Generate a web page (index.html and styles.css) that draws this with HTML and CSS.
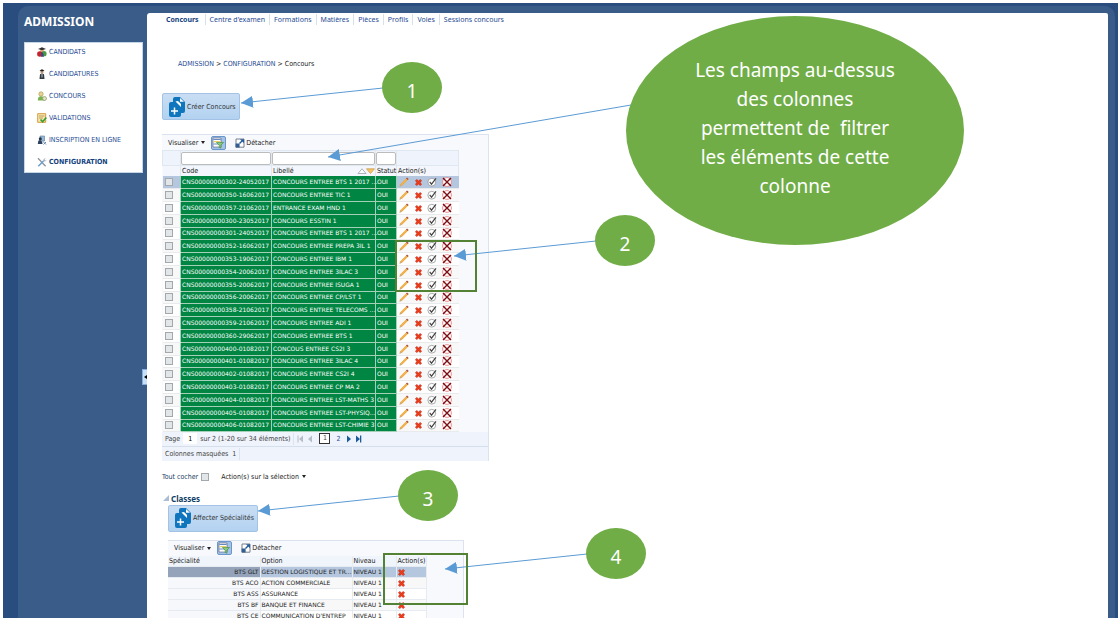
FILE: index.html
```html
<!DOCTYPE html>
<html lang="fr">
<head>
<meta charset="utf-8">
<title>Admission - Concours</title>
<link rel="stylesheet" href="styles.css">
</head>
<body>
<svg class="defs" aria-hidden="true">
  <symbol id="i-pencil" viewBox="0 0 10 10"><path d="M.6 9.5 1.3 7.2 7.3 1.2 9 2.8 3 8.8z" fill="#f0a83a"/><path d="M2.2 8 8.1 2" stroke="#f7bd5c" stroke-width=".7"/><path d="M.4 9.7 1.3 7.2 3 8.8z" fill="#c7ad87"/><path d="M7 1.5 8 .5 9.7 2.1 8.7 3.1z" fill="#a84e3d"/></symbol>
  <symbol id="i-cross" viewBox="0 0 8 8"><path d="M.6 1.9 1.9.6 4 2.2 6.1.6 7.4 1.9 5.9 4 7.4 6.1 6.1 7.4 4 5.8 1.9 7.4.6 6.1 2.1 4z" fill="#f0401a" stroke="#b51a10" stroke-width=".7"/></symbol>
  <symbol id="i-check" viewBox="0 0 10 10"><circle cx="4.8" cy="5.2" r="3.9" fill="#fff" stroke="#888" stroke-width=".7"/><path d="M2.7 4.9 4.5 7.2 9 1.3" fill="none" stroke="#444" stroke-width="1.2"/></symbol>
  <symbol id="i-ban" viewBox="0 0 10 10"><circle cx="5" cy="5" r="4.4" fill="#fff" stroke="#f08080" stroke-width=".9"/><path d="M1 1 9 9M9 1 1 9" stroke="#7a0c14" stroke-width="1.4"/></symbol>
  <symbol id="i-copy" viewBox="0 0 18 22"><path d="M5 3q0-2 2-2h5l5 5v9q0 2-2 2H5z" fill="#0f75bd"/><path d="M3 6h5l5 5v8q0 2-2 2H3q-2 0-2-2V8q0-2 2-2z" fill="#0f75bd"/><path d="M12 2v3.700h4z" fill="#fff"/><path d="M7.500 5.500 13 11V8L10 5z" fill="#fff"/><path d="M6.500 11.500v7M3 15h7" stroke="#fff" stroke-width="1.500"/></symbol>
  <symbol id="i-filter" viewBox="0 0 12 12"><path d="M1 1h8v9H1z" fill="#fff" stroke="#557" stroke-width=".6"/><path d="M1.300 2.500h7.400M1.300 7h6" stroke="#638bc0" stroke-width="1"/><path d="M1.300 4.600h7.400" stroke="#e5ce68" stroke-width="1.300"/><path d="M4.500 5.500h7L8.900 8.200v3l-1.700-.8V8.200z" fill="#8ac976" stroke="#39883f" stroke-width=".6"/></symbol>
  <symbol id="i-detach" viewBox="0 0 10 10"><path d="M1 1h8v8.200H1z" fill="#fff" stroke="#66717f" stroke-width=".9"/><path d="M.6 5.500h4v4h-4z" fill="#345d91"/><path d="M5 1.200h4v4z" fill="#245a9c"/><path d="M4.500 5.500 7.700 2.300" stroke="#245a9c" stroke-width="1.400"/></symbol>
</svg>
<div class="page">
  <div class="shell"><div class="board">
    <aside class="side">
      <h1>ADMISSION</h1>
      <ul class="menu">
        <li><a href="#"><svg viewBox="0 0 10 10"><circle cx="5" cy="3.500" r="2" fill="#e9b183"/><path d="M1 2 5 .300 9 2 5 3.300z" fill="#333"/><circle cx="2.800" cy="7" r="2.700" fill="#c8202c"/><circle cx="7" cy="6.700" r="2.600" fill="#4b9a41"/><path d="M4 5.500h2L7 9.700H4z" fill="#354b86"/></svg>CANDIDATS</a></li>
        <li><a href="#"><svg viewBox="0 0 10 10"><circle cx="5" cy="2.800" r="1.700" fill="#c99b75"/><path d="M2.500 1.500 5 .200 7.500 1.500 5 2.500z" fill="#222"/><path d="M2.500 10 3 5.200 5 4.300 7 5.200 7.500 10z" fill="#32383f"/><path d="M5 4.500v4" stroke="#fff" stroke-width=".7"/></svg>CANDIDATURES</a></li>
        <li><a href="#"><svg viewBox="0 0 10 10"><circle cx="4" cy="3" r="2.200" fill="#ecd28e" stroke="#9a9750" stroke-width=".6"/><path d="M.8 9.500Q.8 5.300 4 5.300t3.500 4.200z" fill="#78b34e"/><circle cx="7.500" cy="7.500" r="2" fill="#dfe0c8" stroke="#8d9b62" stroke-width=".7"/></svg>CONCOURS</a></li>
        <li><a href="#"><svg viewBox="0 0 10 10"><path d="M.7.700h8v8.600h-8z" fill="#fbe9ae" stroke="#d39a3f"/><path d="M2 3h5.500M2 5h4" stroke="#a5884f" stroke-width=".8"/><path d="M3.500 6.500 5.600 8.700 9.300 4.500" fill="none" stroke="#3e9c35" stroke-width="1.700"/></svg>VALIDATIONS</a></li>
        <li><a href="#"><svg viewBox="0 0 10 10"><path d="M3 1h4.500v5H3z" fill="#96b8d9" stroke="#57789e" stroke-width=".6"/><circle cx="3.300" cy="3.700" r="1.500" fill="#28323f"/><path d="M.8 9 1.300 5.800 3 5 5 6.500 5.500 9z" fill="#2d405c"/><path d="m6 6.500 3 3M6.500 9.500 9 7" stroke="#6688ad"/></svg>INSCRIPTION EN LIGNE</a></li>
        <li class="current"><a href="#"><svg viewBox="0 0 10 10"><path d="M1 1.300 8.600 9.200" stroke="#8c949c" stroke-width="1.300"/><path d="M1.300 9.200 6.500 4" stroke="#69a1d2" stroke-width="1.500"/><path d="M6 4.300Q5.900 1.500 8.800 1.200L7.500 2.700l1 1 1.200-1.200Q9.500 5 6 4.300z" fill="#a9b2ba"/></svg>CONFIGURATION</a></li>
      </ul>
      <button class="collapse" aria-label="Réduire le menu"></button>
    </aside>
    <main class="content">
      <nav class="tabs">
        <a class="current" href="#">Concours</a><a href="#">Centre d'examen</a><a href="#">Formations</a><a href="#">Matières</a><a href="#">Pièces</a><a href="#">Profils</a><a href="#">Voies</a><a href="#">Sessions concours</a>
      </nav>
      <p class="crumbs"><a href="#">ADMISSION</a> &gt; <a href="#">CONFIGURATION</a> &gt; <span>Concours</span></p>
      <button class="big"><svg><use href="#i-copy"/></svg>Créer Concours</button>

      <section class="panel">
        <div class="toolbar">
          <button class="drop">Visualiser</button>
          <button class="toggle" aria-label="Filtrer"><svg><use href="#i-filter"/></svg></button>
          <button class="detach"><svg><use href="#i-detach"/></svg>Détacher</button>
        </div>
        <table class="concours">
          <colgroup><col class="c-check"><col class="c-code"><col class="c-label"><col class="c-state"><col class="c-actions"></colgroup>
          <thead>
            <tr class="filters"><td></td><td><input type="text" aria-label="Filtrer Code"></td><td><input type="text" aria-label="Filtrer Libellé"></td><td><input type="text" aria-label="Filtrer Statut"></td><td></td></tr>
            <tr class="heads"><th></th><th>Code</th><th><div class="sorted">Libellé<svg viewBox="0 0 18 6"><path d="M1 5.500 5 .800 9 5.500z" fill="#fff" stroke="#89939f" stroke-width=".7"/><path d="M9.500.800h8l-4 4.700z" fill="#f8c466" stroke="#c99543" stroke-width=".7"/></svg></div></th><th>Statut</th><th>Action(s)</th></tr>
          </thead>
          <tbody id="concours-rows"></tbody>
        </table>
        <div class="pager">
          <label for="page-no">Page</label><input id="page-no" type="text" value="1"><span>sur 2 (1-20 sur 34 éléments)</span>
          <div class="pages">
            <svg viewBox="0 0 16 8"><path d="M.500.500h1v7h-1zM6 .500v7L2 4zM15 .500v7L11 4z" fill="#b4bdc8"/></svg>
            <strong>1</strong><a href="#">2</a>
            <svg viewBox="0 0 16 8"><path d="M1 .500v7L5 4zM10 .500v7L14 4zM14 .500h1.300v7H14z" fill="#1d5a9c"/></svg>
          </div>
        </div>
        <div class="hidden-cols"><span>Colonnes masquées&nbsp; <b>1</b></span></div>
      </section>

      <div class="selection"><label for="all">Tout cocher</label><input id="all" type="checkbox"><button class="drop">Action(s) sur la sélection</button></div>

      <section class="classes">
        <h2>Classes</h2>
        <button class="big"><svg><use href="#i-copy"/></svg>Affecter Spécialités</button>
        <div class="panel">
          <div class="toolbar">
            <button class="drop">Visualiser</button>
            <button class="toggle" aria-label="Filtrer"><svg><use href="#i-filter"/></svg></button>
            <button class="detach"><svg><use href="#i-detach"/></svg>Détacher</button>
          </div>
          <table class="specs">
            <colgroup><col class="s-spec"><col class="s-option"><col class="s-level"><col class="s-actions"></colgroup>
            <thead><tr><th>Spécialité</th><th>Option</th><th>Niveau</th><th>Action(s)</th></tr></thead>
            <tbody id="spec-rows"></tbody>
          </table>
        </div>
      </section>
    </main>
  </div></div>

  <svg class="arrows" aria-hidden="true">
    <defs><marker id="head" viewBox="0 0 12 12" refX="12" refY="6" markerWidth="12" markerHeight="12" markerUnits="userSpaceOnUse" orient="auto"><path d="M0 0 12 6 0 12z" fill="#5b9bd5"/></marker></defs>
    <g stroke="#5b9bd5" stroke-width="1" marker-end="url(#head)">
      <path d="M383 88 241 103"/><path d="M631 105 328 157"/><path d="M596 241 454 256"/><path d="M399 496 258 511"/><path d="M587 554 445 569"/>
    </g>
  </svg>
  <div class="frame frame-a"></div>
  <div class="frame frame-b"></div>
  <div class="note">Les champs au-dessus<br>des colonnes<br>permettent de&nbsp; filtrer<br>les éléments de cette<br>colonne</div>
  <div class="bubble b1">1</div>
  <div class="bubble b2">2</div>
  <div class="bubble b3">3</div>
  <div class="bubble b4">4</div>
</div>
<script src="script.js"></script>
</body>
</html>
```
FILE: styles.css
```css
* { box-sizing: border-box; }
body { margin: 0; font: 7px/12px "DejaVu Sans Condensed", "DejaVu Sans", sans-serif; color: #222; background: #fff; }
a { color: #1f4b94; text-decoration: none; }
button { font: inherit; color: inherit; padding: 0; border: 0; background: none; white-space: nowrap; }
h1, h2, p, ul { margin: 0; padding: 0; }
.defs { position: absolute; width: 0; height: 0; }

.page { position: relative; height: 100vh; padding: 3px 0 3px 3px; overflow: hidden; }
.shell { height: 100%; padding: 3px 3px 0 15px; background: #2a4d80; }
.board { display: flex; height: 100%; padding: 7px 7px 0 0; border-radius: 10px 10px 0 0; background: #3a5c88; }

.side { position: relative; flex: 0 0 129px; padding-left: 6px; }
.side h1 { color: #fff; font: bold 12px/18px "Noto Sans", sans-serif; }
.menu { list-style: none; width: 119px; margin-top: 11px; padding-bottom: 1px; background: #fff; box-shadow: inset 0 0 0 1px #c5d6e6; }
.menu li { height: 22px; }
.menu li:last-child { height: 20px; }
.menu a { display: flex; align-items: center; gap: 2px; height: 20px; padding-left: 13px; }
.menu svg { width: 10px; height: 10px; }
.menu .current a, .tabs .current { font-weight: bold; color: #123f7d; }
.collapse { position: absolute; right: 0; top: 356px; width: 5px; height: 16px; background: #c9e0f7; border: 1px solid #83aee0; border-right: 0; }
.collapse::before { content: ""; display: block; border: 2px solid transparent; border-right: 3px solid #000; border-left: 0; }

.content { flex: 1; min-width: 0; overflow: hidden; background: #fff; border-radius: 3px 2px 0 0; padding-left: 15px; }
.tabs { display: flex; padding-top: 1px; font: 7px/11px "Noto Sans", sans-serif; }
.tabs a { padding: 0 4px; border-left: 1px solid #d7e1eb; }
.tabs a:first-child { border: 0; padding-right: 6px; }
.crumbs { margin: 33px 0 23px 16px; }

.big { display: flex; align-items: center; gap: 1px; height: 27px; padding: 0 3px 0 5px; border: 1px solid #a3c3e6; border-radius: 2px; background: linear-gradient(#c9def3, #b3d2f1); color: #333; }
.big svg { width: 18px; height: 22px; }

.panel { width: 327px; margin-top: 14px; background: #f7f9fd; border: 0 solid #dbe4ee; border-width: 1px 1px 0 0; }
.toolbar { display: flex; align-items: center; height: 15px; padding-left: 6px; }
.drop { display: flex; align-items: center; gap: 3px; }
.drop::after { content: ""; border: 2px solid transparent; border-top: 3px solid #222; border-bottom: 0; }
.toggle { width: 15px; height: 14px; margin: 0 9px 0 6px; border: 1px solid #6b96c9; border-radius: 2px; background: #a3c4e8; }
.toggle svg { display: block; width: 12px; height: 12px; }
.detach { display: flex; align-items: center; gap: 1px; }
.detach svg { width: 10px; height: 10px; }

table { border-collapse: collapse; table-layout: fixed; }
th, td { padding: 0 0 0 1px; text-align: left; font-weight: normal; white-space: nowrap; }
tbody { font: 6px/10px "DejaVu Sans", sans-serif; }
.concours { width: 296px; }
.c-check { width: 18px; } .c-code { width: 91px; } .c-label { width: 104px; } .c-state { width: 21px; } .c-actions { width: 62px; }
.filters { height: 15px; background: #eff3fb; }
.filters td { border: 1px solid #dfe7f0; padding: 0; }
.filters input { display: block; width: 100%; height: 13px; border: 1px solid #bcbcbc; border-radius: 2px; background: #fff; padding: 0; }
.heads { height: 10px; background: #f3f6fc; line-height: 10px; }
.heads th { border-right: 1px solid #dfe7f0; }
.sorted { display: flex; justify-content: space-between; align-items: center; }
.sorted svg { width: 18px; height: 6px; }
.concours tbody tr { height: 13px; background: #fff; }
.concours tbody tr:nth-child(5n), .concours tbody tr:first-child { height: 12px; }
.concours tbody tr:nth-child(even) { background: #f8f8f8; }
.concours tbody td { border-bottom: 1px solid #e8eaec; }
.concours tbody td.fill { background: #008542; color: #fff; border: 1px solid #a3d0b6; border-top: 0; }
.concours tbody tr:first-child, .specs tbody tr:first-child { background: #b5c7de; }
input[type="checkbox"] { appearance: none; display: block; width: 8px; height: 8px; margin: 0; border: 1px solid #a3a8ad; background: #e3e6e9; }
.concours tbody input { margin-left: 1px; }
.concours tbody td:last-child { padding: 0; }
.actions { display: flex; align-items: center; height: 10px; }
.actions button { width: 14px; height: 10px; }
.actions button:last-child { width: 16px; }
.actions svg { display: block; width: 10px; height: 10px; margin: auto; }
.actions .i-cross { width: 7px; height: 7px; margin-top: 1px; }

.pager { display: flex; align-items: center; gap: 3px; height: 15px; padding-left: 3px; background: #eff3fb; border-bottom: 1px solid #d5dfeb; color: #444; }
.pager input { width: 14px; height: 11px; padding: 0; border: 0; font: inherit; text-align: center; background: #fff; }
.pages { display: flex; align-items: center; gap: 6px; padding-left: 3px; border-left: 1px solid #dbe4ee; }
.pages svg { width: 16px; height: 8px; }
.pages strong { width: 11px; line-height: 9px; border: 1px solid #333; text-align: center; font-weight: normal; background: #fff; }
.hidden-cols { height: 14px; padding: 1px 3px; background: #eff3fb; color: #444; }
.hidden-cols span { display: inline-block; padding-right: 3px; border-right: 1px solid #dbe4ee; }
.hidden-cols b { font-weight: normal; }

.selection { display: flex; align-items: center; height: 12px; margin-top: 10px; color: #23415f; }
.selection input { margin: 0 12px 0 3px; }
.selection .drop { color: #222; }

.classes { padding-left: 6px; }
.classes h2 { display: flex; align-items: center; gap: 2px; margin: 10px 0 1px -5px; color: #113f66; font: bold 8px/11px "Noto Sans", sans-serif; }
.classes h2::before { content: ""; border: solid transparent; border-width: 0 0 6px 6px; border-bottom-color: #a9bed3; }
.classes .panel { width: 296px; margin-top: 8px; }
.specs { width: 258px; }
.s-spec { width: 92px; } .s-option { width: 92px; } .s-level { width: 44px; } .s-actions { width: 30px; }
.specs tr { height: 11px; background: #fff; }
.specs th { line-height: 10px; }
.specs tr:nth-child(even) { background: #f8f8f8; }
.specs thead tr { background: #f0f4fb; }
.specs th, .specs td { border: 1px solid #e6ebf2; border-width: 0 1px 1px 0; }
.specs tbody td:first-child { padding-right: 1px; text-align: right; background: #f6f8fc; }
.specs tbody tr:first-child td:first-child { background: #94a3b9; }
.specs button { display: block; }
.specs .i-cross { display: block; width: 7px; height: 7px; }

.arrows { position: absolute; left: 0; top: 0; width: 100%; height: 100%; }
.frame { position: absolute; border: 2px solid #548235; }
.frame-a { left: 395px; top: 240px; width: 82px; height: 52px; }
.frame-b { left: 383px; top: 553px; width: 85px; height: 52px; }
.note, .bubble { position: absolute; border-radius: 50%; background: #70ad47; color: #fff; text-align: center; font-family: "Noto Sans", sans-serif; }
.note { left: 626px; top: 16px; width: 338px; height: 229px; padding-top: 40px; font-size: 19px; line-height: 29px; }
.bubble { width: 60px; height: 51px; padding-top: 4px; font-size: 19px; line-height: 51px; }
.b1 { left: 382px; top: 62px; } .b2 { left: 595px; top: 215px; } .b3 { left: 398px; top: 470px; } .b4 { left: 586px; top: 528px; }
```
FILE: script.js
```js
const concours = [
  ["302-24052017", "CONCOURS ENTREE BTS 1 2017 ..."],
  ["350-16062017", "CONCOURS ENTREE TIC 1"],
  ["357-21062017", "ENTRANCE EXAM HND 1"],
  ["300-23052017", "CONCOURS ESSTIN 1"],
  ["301-24052017", "CONCOURS ENTREE BTS 1 2017 ..."],
  ["352-16062017", "CONCOURS ENTREE PREPA 3IL 1"],
  ["353-19062017", "CONCOURS ENTREE IBM 1"],
  ["354-20062017", "CONCOURS ENTREE 3ILAC 3"],
  ["355-20062017", "CONCOURS ENTREE ISUGA 1"],
  ["356-20062017", "CONCOURS ENTREE CP/LST 1"],
  ["358-21062017", "CONCOURS ENTREE TELECOMS ..."],
  ["359-21062017", "CONCOURS ENTREE ADI 1"],
  ["360-29062017", "CONCOURS ENTREE BTS 1"],
  ["400-01082017", "CONCOUS ENTREE CS2I 3"],
  ["401-01082017", "CONCOURS ENTREE 3ILAC 4"],
  ["402-01082017", "CONCOURS ENTREE CS2I 4"],
  ["403-01082017", "CONCOURS ENTREE CP MA 2"],
  ["404-01082017", "CONCOURS ENTREE LST-MATHS 3"],
  ["405-01082017", "CONCOURS ENTREE LST-PHYSIQ..."],
  ["406-01082017", "CONCOURS ENTREE LST-CHIMIE 3"]
];
const specs = [
  ["BTS GLT", "GESTION LOGISTIQUE ET TR..."],
  ["BTS ACO", "ACTION COMMERCIALE"],
  ["BTS ASS", "ASSURANCE"],
  ["BTS BF", "BANQUE ET FINANCE"],
  ["BTS CE", "COMMUNICATION D'ENTREP"]
];
const action = (name, label) =>
  `<button aria-label="${label}"><svg class="i-${name}"><use href="#i-${name}"/></svg></button>`;

document.getElementById("concours-rows").innerHTML = concours.map(([code, label]) =>
  `<tr><td><input type="checkbox" aria-label="${label}"></td><td class="fill">CNS00000000${code}</td>` +
  `<td class="fill">${label}</td><td class="fill">OUI</td><td><div class="actions">` +
  action("pencil", "Modifier") + action("cross", "Supprimer") + action("check", "Valider") + action("ban", "Annuler") +
  `</div></td></tr>`).join("");

document.getElementById("spec-rows").innerHTML = specs.map(([code, option]) =>
  `<tr><td>${code}</td><td>${option}</td><td>NIVEAU 1</td><td>${action("cross", "Supprimer")}</td></tr>`).join("");
```
